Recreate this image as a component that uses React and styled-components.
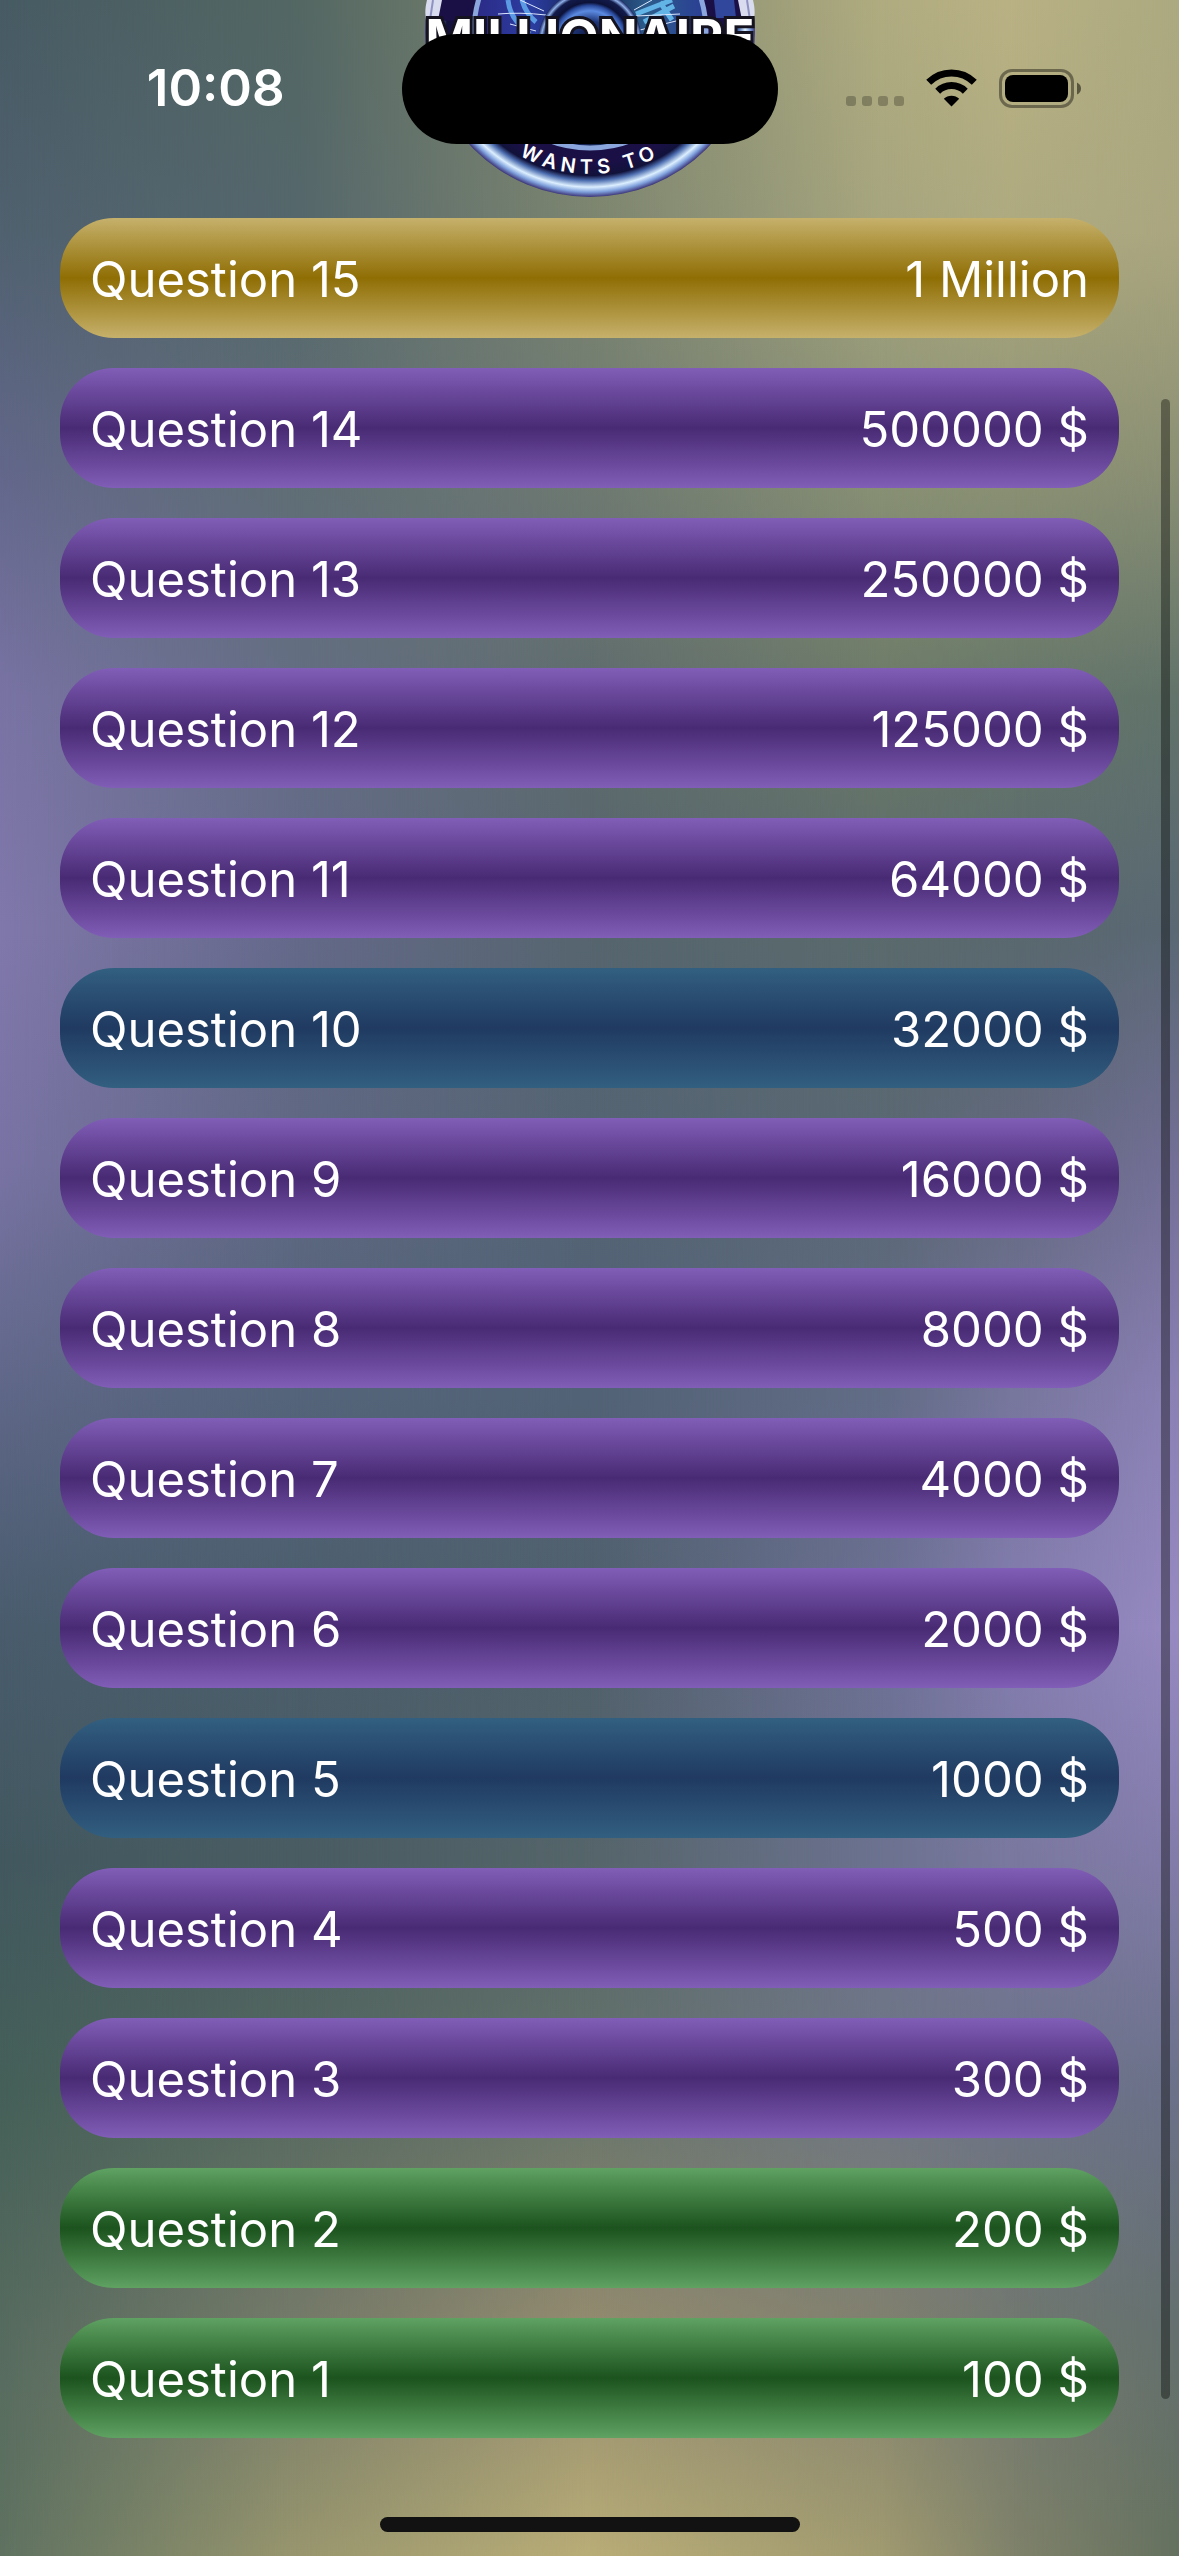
import React from "react";
import styled, { createGlobalStyle } from "styled-components";

const GlobalStyle = createGlobalStyle`
  *, *::before, *::after { box-sizing: border-box; }
  html { background: #54646a; scrollbar-width: none; }
  body { margin: 0; font-family: Inter, Roboto, "Liberation Sans", sans-serif; }
`;

const Screen = styled.div`
  position: relative;
  min-height: 100vh;
  display: flex;
  flex-direction: column;
  overflow: hidden;
  isolation: isolate;
`;

const Backdrop = styled.div`
  position: absolute;
  inset: 0;
  z-index: -1;
`;

/* One colour band of the blurred backdrop; it fades in between $from and $to. */
const Haze = styled.div`
  position: absolute;
  inset: 0;
  background: linear-gradient(to bottom, ${(p) => p.$colors.join(", ")});
  mask-image: linear-gradient(to right, transparent ${(p) => p.$from}%, #000 ${(p) => p.$to}%);
`;

/* Colours sit at even steps from the top of the screen to the bottom. */
const HAZE = [
  { from: -2, to: -1, colors: ["#475b64", "#50616f", "#62678a", "#7973a4", "#8078ab", "#7973a4", "#5f6788", "#495c6d", "#42585f", "#456059", "#566b5f", "#5f7261"] },
  { from: 0, to: 25, colors: ["#536763", "#55676c", "#5f6e74", "#646e84", "#64698a", "#5f6882", "#54647a", "#4b5e6c", "#495c62", "#56695f", "#757a69", "#98966e"] },
  { from: 25, to: 50, colors: ["#80886f", "#7c8570", "#6f7a72", "#5f6c6e", "#56656e", "#546474", "#526276", "#50606c", "#55656a", "#66746a", "#938b6f", "#b9ad77"] },
  { from: 50, to: 75, colors: ["#b0ac80", "#a6a57e", "#8b9275", "#6c7a68", "#5a6a6c", "#5a6874", "#626c86", "#6e7196", "#6c7290", "#707784", "#80806f", "#a09a70"] },
  { from: 75, to: 86, colors: ["#b9b184", "#aeaa80", "#8d9274", "#66776a", "#59686e", "#63697f", "#77769d", "#847db0", "#7a789f", "#6d7387", "#717870", "#7f826a"] },
  { from: 86, to: 100, colors: ["#aba980", "#aaa67f", "#8b9074", "#61736a", "#5a6874", "#736f97", "#8b81b5", "#978ac2", "#827caa", "#6b7189", "#64706f", "#65715f"] },
];

const StatusBar = styled.header`
  display: grid;
  grid-template-columns: 1fr 376px 1fr;
  align-items: center;
  height: 178px;
`;

const Time = styled.time`
  justify-self: center;
  padding: 0 0 2px 30px;
  color: #fff;
  font-size: 51px;
  font-weight: 600;
  line-height: 60px;
`;

const Island = styled.div`
  height: 110px;
  border-radius: 55px;
  background: #000;
`;

const StatusIcons = styled.div`
  justify-self: end;
  display: flex;
  align-items: center;
  gap: 22px;
  padding: 0 98px 2px 0;
`;

const Emblem = styled.svg`
  position: absolute;
  z-index: -1;
  top: 0;
  left: 50%;
  width: 360px;
  height: 200px;
  transform: translateX(-50%);
`;

const Ladder = styled.ol`
  display: flex;
  flex-direction: column;
  gap: 30px;
  margin: 0;
  padding: 40px 60px 0;
  list-style: none;
`;

const TONES = {
  gold: ["#c6b16c", "#8f6e04"],
  purple: ["#815eb7", "#482a74"],
  blue: ["#325f80", "#203a61"],
  green: ["#5fa262", "#1c531e"],
};

const Rung = styled.li`
  display: flex;
  align-items: center;
  justify-content: space-between;
  height: 120px;
  padding: 4px 30px 0;
  border-radius: 54px;
  color: #fff;
  font-size: 49px;
  line-height: 60px;
  background: linear-gradient(
    to bottom,
    ${(p) => TONES[p.$tone][0]},
    ${(p) => TONES[p.$tone][1]} 50%,
    ${(p) => TONES[p.$tone][0]}
  );
`;

const HomeArea = styled.footer`
  display: flex;
  justify-content: center;
  align-items: flex-end;
  flex: 1;
  padding-bottom: 24px;
`;

const HomeBar = styled.div`
  width: 420px;
  height: 15px;
  border-radius: 8px;
  background: #121212;
`;

const ScrollThumb = styled.div`
  position: absolute;
  top: 399px;
  right: 9px;
  bottom: 157px;
  width: 9px;
  border-radius: 5px;
  background: rgba(0, 0, 0, 0.36);
`;

const QUESTIONS = [
  [15, "1 Million", "gold"],
  [14, "500000 $", "purple"],
  [13, "250000 $", "purple"],
  [12, "125000 $", "purple"],
  [11, "64000 $", "purple"],
  [10, "32000 $", "blue"],
  [9, "16000 $", "purple"],
  [8, "8000 $", "purple"],
  [7, "4000 $", "purple"],
  [6, "2000 $", "purple"],
  [5, "1000 $", "blue"],
  [4, "500 $", "purple"],
  [3, "300 $", "purple"],
  [2, "200 $", "green"],
  [1, "100 $", "green"],
];

function Logo() {
  return (
    <Emblem viewBox="0 0 360 200" aria-hidden="true">
      <defs>
        <radialGradient id="rim" gradientUnits="userSpaceOnUse" cx="180" cy="32" r="165">
          <stop offset="0.8" stopColor="#1a1046" />
          <stop offset="0.87" stopColor="#11123a" />
          <stop offset="0.9" stopColor="#4b6cae" />
          <stop offset="0.94" stopColor="#dcefff" />
          <stop offset="0.97" stopColor="#7fa0dc" />
          <stop offset="1" stopColor="#3c3478" />
        </radialGradient>
        <linearGradient id="disc" x1="0" x2="1" y1="0" y2="0">
          <stop offset="0" stopColor="#2c2a86" />
          <stop offset="0.25" stopColor="#2b3da0" />
          <stop offset="0.5" stopColor="#14204c" />
          <stop offset="0.75" stopColor="#2c5c8c" />
          <stop offset="1" stopColor="#2b3d94" />
        </linearGradient>
        <radialGradient id="eye" gradientUnits="userSpaceOnUse" cx="180" cy="42" r="52">
          <stop offset="0" stopColor="#0c1230" />
          <stop offset="0.4" stopColor="#1d3478" />
          <stop offset="0.6" stopColor="#5b8ae0" />
          <stop offset="0.7" stopColor="#2a4a9c" />
          <stop offset="0.76" stopColor="#0c1238" />
          <stop offset="0.88" stopColor="#141c4c" />
          <stop offset="0.94" stopColor="#8fb0e8" />
          <stop offset="1" stopColor="#1b2560" />
        </radialGradient>
        <path id="arc" d="M38 32 A142 142 0 0 0 322 32" />
      </defs>
      <circle cx="180" cy="32" r="165" fill="url(#rim)" />
      <path d="M17 0 C15 8 15 14 16 20 L30 20 L36 0Z M343 0 C345 8 345 14 344 20 L330 20 L324 0Z" fill="#d9dbee" />
      <path d="M23 0 L20 20 M337 0 L340 20" stroke="#8f93c4" strokeWidth="2" />
      <path d="M32 0 L28 20 L48 22 L66 0Z M328 0 L332 20 L312 22 L294 0Z" fill="#1a1046" />
      <path d="M304 0 H324 L326 18 H306Z" fill="#31479c" />
      <circle cx="180" cy="32" r="116" fill="url(#disc)" stroke="#8aa6dc" strokeWidth="5" />
      <path d="M98 0 Q100 20 120 34 M112 0 Q116 14 126 22" stroke="#5b9be4" strokeWidth="5" fill="none" />
      <path d="M226 14 L262 0 M234 22 L264 6 M250 2 L262 20" stroke="#62b4e6" strokeWidth="5" fill="none" />
      <path d="M110 0 L134 11 M88 14 Q110 12 136 15 M100 24 L126 31 M224 10 L242 0 M226 16 L270 14 M230 30 L270 20" stroke="#dce8ff" strokeWidth="1" fill="none" />
      <circle cx="180" cy="42" r="52" fill="url(#eye)" />
      <text
        x="180"
        y="56"
        textAnchor="middle"
        fontFamily="Inter, sans-serif"
        fontWeight="700"
        fontSize="51"
        fill="#fff"
        stroke="#15131f"
        strokeWidth="6"
        paintOrder="stroke"
      >
        MILLIONAIRE
      </text>
      <text fontFamily="Inter, sans-serif" fontWeight="600" fontSize="20" letterSpacing="5" fill="#fff">
        <textPath href="#arc" startOffset="50%" textAnchor="middle">WANTS TO</textPath>
      </text>
    </Emblem>
  );
}

function Signal() {
  return (
    <svg width="58" height="52" viewBox="0 0 58 52" aria-hidden="true">
      {[0, 16, 32, 48].map((x) => (
        <rect key={x} x={x} y="34" width="10" height="10" rx="3" fill="#000" fillOpacity="0.24" />
      ))}
    </svg>
  );
}

function Wifi() {
  return (
    <svg width="51" height="38" viewBox="0 0 51 38" fill="none" stroke="#000" aria-hidden="true">
      <path d="M2.7 13.3 A32.5 32.5 0 0 1 48.3 13.3" strokeWidth="7" />
      <path d="M11.7 22.2 A19.8 19.8 0 0 1 39.3 22.2" strokeWidth="7" />
      <path d="M25.5 37.5 L17.8 29.8 A11 11 0 0 1 33.2 29.8Z" fill="#000" stroke="none" />
    </svg>
  );
}

function Battery() {
  return (
    <svg width="82" height="39" viewBox="0 0 82 39" aria-hidden="true">
      <rect x="1.5" y="1.5" width="72" height="36" rx="11.5" fill="none" stroke="#000" strokeOpacity="0.4" strokeWidth="3" />
      <rect x="6" y="6" width="63" height="27" rx="8" fill="#000" />
      <path d="M78 13.5 Q82 15.5 82 19.5 Q82 23.5 78 25.5Z" fill="#000" fillOpacity="0.5" />
    </svg>
  );
}

export default function App() {
  return (
    <Screen>
      <GlobalStyle />
      <Backdrop>
        {HAZE.map((h) => (
          <Haze key={h.from} $from={h.from} $to={h.to} $colors={h.colors} />
        ))}
      </Backdrop>
      <Logo />
      <StatusBar>
        <Time>10:08</Time>
        <Island />
        <StatusIcons>
          <Signal />
          <Wifi />
          <Battery />
        </StatusIcons>
      </StatusBar>
      <Ladder>
        {QUESTIONS.map(([number, prize, tone]) => (
          <Rung key={number} $tone={tone}>
            <span>Question {number}</span>
            <span>{prize}</span>
          </Rung>
        ))}
      </Ladder>
      <HomeArea>
        <HomeBar />
      </HomeArea>
      <ScrollThumb />
    </Screen>
  );
}
